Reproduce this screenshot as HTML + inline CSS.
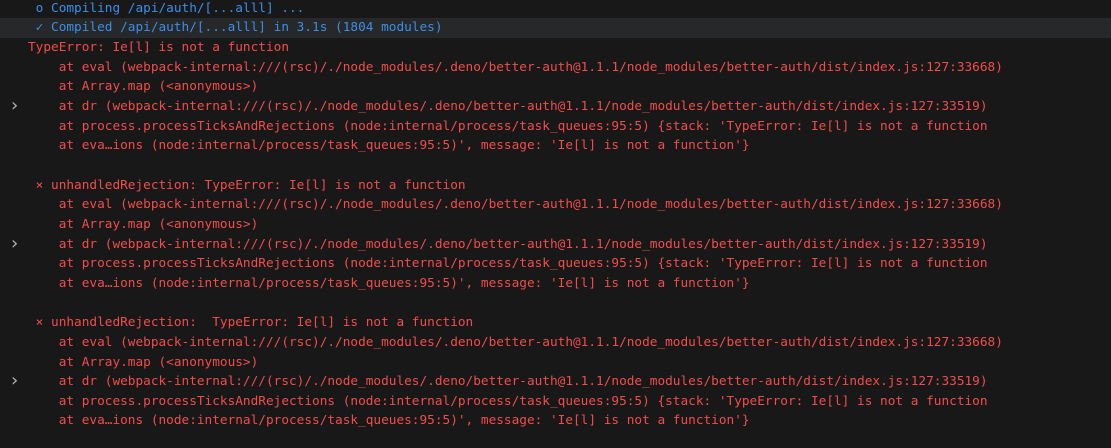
<!DOCTYPE html>
<html><head><meta charset="utf-8"><style>
html,body{margin:0;padding:0;width:1111px;height:448px;overflow:hidden;background:#181818;}
.wrap{position:absolute;left:0;top:-1.3px;width:1111px;}
.l{position:relative;height:19.67px;line-height:19.67px;white-space:pre;font-family:"DejaVu Sans Mono","Liberation Mono",monospace;font-size:12.75px;color:#f14c4c;padding-left:28px;}
.b{color:#3b8eea;}
.hl{background:#262829;}
.ch{position:absolute;left:11px;top:-1px;color:#b0b4b8;font-family:"DejaVu Sans",sans-serif;font-size:18px;}
</style></head><body><div class="wrap">
<div class="l b"> o Compiling /api/auth/[...alll] ...</div>
<div class="l b hl"> ✓ Compiled /api/auth/[...alll] in 3.1s (1804 modules)</div>
<div class="l">TypeError: Ie[l] is not a function</div>
<div class="l">    at eval (webpack-internal:///(rsc)/./node_modules/.deno/better-auth@1.1.1/node_modules/better-auth/dist/index.js:127:33668)</div>
<div class="l">    at Array.map (&lt;anonymous&gt;)</div>
<div class="l"><span class="ch">›</span>    at dr (webpack-internal:///(rsc)/./node_modules/.deno/better-auth@1.1.1/node_modules/better-auth/dist/index.js:127:33519)</div>
<div class="l">    at process.processTicksAndRejections (node:internal/process/task_queues:95:5) {stack: 'TypeError: Ie[l] is not a function</div>
<div class="l">    at eva…ions (node:internal/process/task_queues:95:5)', message: 'Ie[l] is not a function'}</div>
<div class="l"> </div>
<div class="l"> × unhandledRejection: TypeError: Ie[l] is not a function</div>
<div class="l">    at eval (webpack-internal:///(rsc)/./node_modules/.deno/better-auth@1.1.1/node_modules/better-auth/dist/index.js:127:33668)</div>
<div class="l">    at Array.map (&lt;anonymous&gt;)</div>
<div class="l"><span class="ch">›</span>    at dr (webpack-internal:///(rsc)/./node_modules/.deno/better-auth@1.1.1/node_modules/better-auth/dist/index.js:127:33519)</div>
<div class="l">    at process.processTicksAndRejections (node:internal/process/task_queues:95:5) {stack: 'TypeError: Ie[l] is not a function</div>
<div class="l">    at eva…ions (node:internal/process/task_queues:95:5)', message: 'Ie[l] is not a function'}</div>
<div class="l"> </div>
<div class="l"> × unhandledRejection:  TypeError: Ie[l] is not a function</div>
<div class="l">    at eval (webpack-internal:///(rsc)/./node_modules/.deno/better-auth@1.1.1/node_modules/better-auth/dist/index.js:127:33668)</div>
<div class="l">    at Array.map (&lt;anonymous&gt;)</div>
<div class="l"><span class="ch">›</span>    at dr (webpack-internal:///(rsc)/./node_modules/.deno/better-auth@1.1.1/node_modules/better-auth/dist/index.js:127:33519)</div>
<div class="l">    at process.processTicksAndRejections (node:internal/process/task_queues:95:5) {stack: 'TypeError: Ie[l] is not a function</div>
<div class="l">    at eva…ions (node:internal/process/task_queues:95:5)', message: 'Ie[l] is not a function'}</div>
</div></body></html>
